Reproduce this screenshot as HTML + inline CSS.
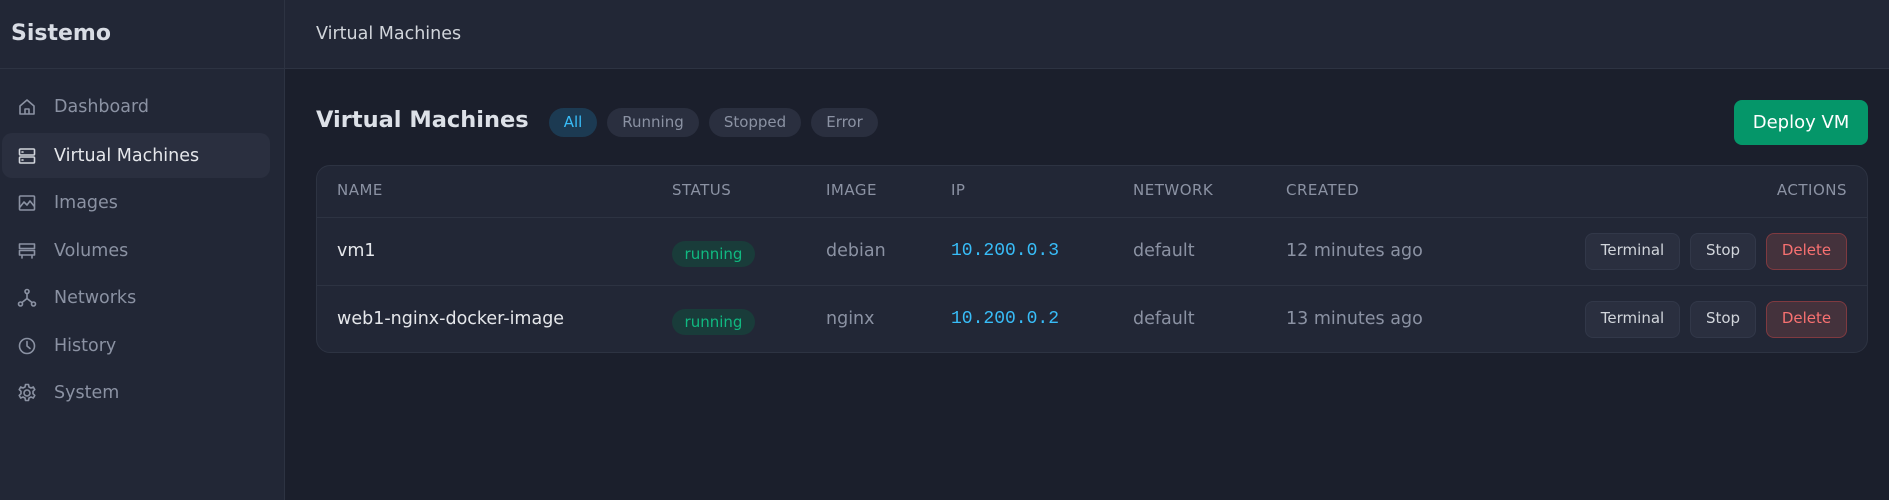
<!DOCTYPE html>
<html><head><meta charset="utf-8"><style>
*{box-sizing:border-box;margin:0;padding:0}
body{width:1889px;height:500px;overflow:hidden;background:#1b1f2c;font-family:"DejaVu Sans","Liberation Sans",sans-serif;color:#d1d5db;position:relative}
.sb{position:absolute;left:0;top:0;width:285px;height:500px;background:#222736;border-right:1px solid #2d3342}
.logo{height:69px;border-bottom:1px solid #2d3342;padding-left:11px;font-weight:bold;font-size:22px;line-height:68px;color:#d8dce4}
.nav{position:absolute;left:2px;width:268px;height:45px;border-radius:10px;display:flex;align-items:center;font-size:17.5px;color:#8b92a3}
.nav svg{position:absolute;left:15px;width:20px;height:20px;fill:none;stroke:#8b92a3;stroke-width:1.6;stroke-linecap:round;stroke-linejoin:round}
.nav span{position:absolute;left:52px}
.nav.act{background:#2a2f3f;color:#e5e7eb}
.nav.act svg{stroke:#d1d5db}
.top{position:absolute;left:285px;top:0;right:0;height:69px;background:#222736;border-bottom:1px solid #2d3342;padding-left:31px;line-height:68px;font-size:17.5px;color:#d1d5db}
.title{position:absolute;left:316px;top:107px;font-size:22.5px;font-weight:bold;color:#dde1e8}
.pill{position:absolute;top:108px;height:29px;border-radius:15px;background:#2a2f3f;color:#8b92a3;font-size:15px;line-height:29px;text-align:center}
.deploy{position:absolute;left:1734px;top:100px;width:134px;height:45px;border-radius:8px;background:#059669;color:#fff;font-size:18px;line-height:45px;text-align:center}
.tbl{position:absolute;left:316px;top:165px;width:1552px;height:188px;border:1px solid #2d3342;border-radius:14px;background:#222736;overflow:hidden}
.row{position:absolute;left:0;right:0;border-top:1px solid #2d3342}
.c{position:absolute;white-space:nowrap}
.h{font-size:15px;color:#8b92a3;letter-spacing:.5px;top:15px}
.d{font-size:17.5px;top:23px;color:#8b92a3}
.ip{font-family:"Liberation Mono",monospace;color:#38bdf8;font-size:18px}
.run{position:absolute;left:355px;top:23px;width:83px;height:26px;border-radius:13px;background:#193c3a;color:#10b981;font-size:15px;line-height:26px;text-align:center}
.b{position:absolute;top:15px;height:37px;border-radius:8px;background:#2a2f3f;border:1px solid #323849;color:#d1d5db;font-size:15px;line-height:33px;text-align:center}
.del{background:#44323c;border-color:#7f3a40;color:#f87171}
</style></head><body>
<div class="sb">
<div class="logo">Sistemo</div>
<div class="nav" style="top:84px"><svg viewBox="0 0 20 20"><path d="M3 9l7-6 7 6v8H3z M8 17v-5h4v5"/></svg><span>Dashboard</span></div>
<div class="nav act" style="top:133px"><svg viewBox="0 0 20 20"><rect x="2.5" y="3" width="15" height="6" rx="1"/><rect x="2.5" y="11" width="15" height="6" rx="1"/><path d="M5 6h1M5 14h1"/></svg><span>Virtual Machines</span></div>
<div class="nav" style="top:180px"><svg viewBox="0 0 20 20"><rect x="2.5" y="3" width="15" height="14" rx="1"/><path d="M3 14l4-5 3 3 3-4 4 5"/></svg><span>Images</span></div>
<div class="nav" style="top:228px"><svg viewBox="0 0 20 20"><rect x="2.5" y="3" width="15" height="4.5"/><rect x="2.5" y="9.5" width="15" height="4.5"/><path d="M5 14v3M15 14v3"/></svg><span>Volumes</span></div>
<div class="nav" style="top:275px"><svg viewBox="0 0 20 20"><circle cx="10" cy="3.5" r="2"/><circle cx="3.5" cy="16" r="2"/><circle cx="16.5" cy="16" r="2"/><path d="M10 5.5v5l-5 4M10 10.5l5 4"/></svg><span>Networks</span></div>
<div class="nav" style="top:323px"><svg viewBox="0 0 20 20"><circle cx="10" cy="10" r="7.5"/><path d="M10 5.5V10l3 2.5"/></svg><span>History</span></div>
<div class="nav" style="top:370px"><svg viewBox="0 0 20 20"><circle cx="10" cy="10" r="3"/><path d="M8.5 1.5h3l.5 2.5 2 1 2.3-1 1.5 2.6-1.8 1.7v2.4l1.8 1.7-1.5 2.6-2.3-1-2 1-.5 2.5h-3l-.5-2.5-2-1-2.3 1-1.5-2.6 1.8-1.7V8.3L2.2 6.6l1.5-2.6 2.3 1 2-1z"/></svg><span>System</span></div>
</div>
<div class="top">Virtual Machines</div>
<div class="title">Virtual Machines</div>
<div class="pill" style="left:549px;width:48px;background:#1c3a52;color:#38bdf8">All</div>
<div class="pill" style="left:607px;width:92px">Running</div>
<div class="pill" style="left:709px;width:92px">Stopped</div>
<div class="pill" style="left:811px;width:67px">Error</div>
<div class="deploy">Deploy VM</div>
<div class="tbl">
<div class="c h" style="left:20px">NAME</div>
<div class="c h" style="left:355px">STATUS</div>
<div class="c h" style="left:509px">IMAGE</div>
<div class="c h" style="left:634px">IP</div>
<div class="c h" style="left:816px">NETWORK</div>
<div class="c h" style="left:969px">CREATED</div>
<div class="c h" style="right:20px">ACTIONS</div>
<div class="row" style="top:51px;height:68px">
<div class="c d" style="left:20px;color:#e5e7eb">vm1</div>
<div class="run">running</div>
<div class="c d" style="left:509px">debian</div>
<div class="c d ip" style="left:634px">10.200.0.3</div>
<div class="c d" style="left:816px">default</div>
<div class="c d" style="left:969px">12 minutes ago</div>
<div class="b" style="left:1268px;width:95px">Terminal</div>
<div class="b" style="left:1373px;width:66px">Stop</div>
<div class="b del" style="left:1449px;width:81px">Delete</div>
</div>
<div class="row" style="top:119px;height:69px">
<div class="c d" style="left:20px;color:#e5e7eb">web1-nginx-docker-image</div>
<div class="run">running</div>
<div class="c d" style="left:509px">nginx</div>
<div class="c d ip" style="left:634px">10.200.0.2</div>
<div class="c d" style="left:816px">default</div>
<div class="c d" style="left:969px">13 minutes ago</div>
<div class="b" style="left:1268px;width:95px">Terminal</div>
<div class="b" style="left:1373px;width:66px">Stop</div>
<div class="b del" style="left:1449px;width:81px">Delete</div>
</div>
</div>
</body></html>
